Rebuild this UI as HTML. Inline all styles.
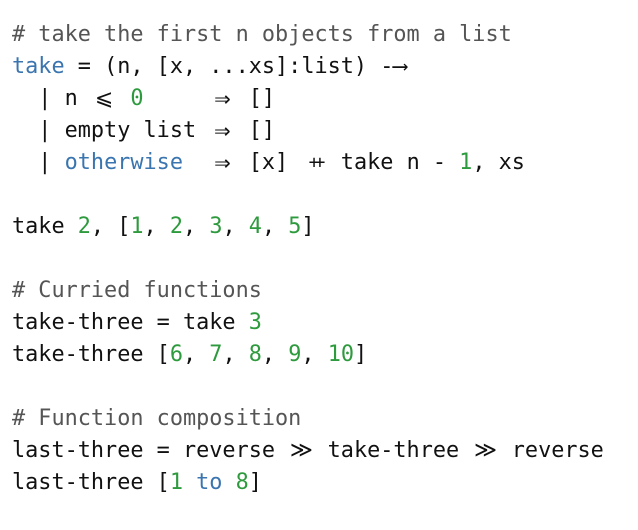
<!DOCTYPE html>
<html><head><meta charset="utf-8"><style>
html,body{margin:0;padding:0;background:#fff;width:638px;height:530px;overflow:hidden}
pre{margin:0;position:absolute;left:12px;top:19px;font-family:"DejaVu Sans Mono","Liberation Mono",monospace;font-size:21.85px;line-height:32px;color:#111}
.c{color:#555}.b{color:#3a75b0}.g{color:#2e9a3e}
.l{display:inline-block;width:26.3px;text-align:center;white-space:nowrap;line-height:32px;vertical-align:top}
.big{font-size:27px}
.pp{font-size:18px;letter-spacing:-5px;font-weight:300}
.a{display:inline-block;width:39.4px;white-space:nowrap;vertical-align:top;line-height:32px}
</style></head><body><pre><span class="c"># take the first n objects from a list</span>
<span class="b">take</span> = (n, [x, ...xs]:list) <span class="a">-⟶</span>
  | n <span class="l">⩽</span> <span class="g">0</span>     <span class="l big">⇒</span> []
  | empty list <span class="l big">⇒</span> []
  | <span class="b">otherwise</span>  <span class="l big">⇒</span> [x] <span class="l pp">++</span> take n - <span class="g">1</span>, xs

take <span class="g">2</span>, [<span class="g">1</span>, <span class="g">2</span>, <span class="g">3</span>, <span class="g">4</span>, <span class="g">5</span>]

<span class="c"># Curried functions</span>
take-three = take <span class="g">3</span>
take-three [<span class="g">6</span>, <span class="g">7</span>, <span class="g">8</span>, <span class="g">9</span>, <span class="g">10</span>]

<span class="c"># Function composition</span>
last-three = reverse <span class="l">≫</span> take-three <span class="l">≫</span> reverse
last-three [<span class="g">1</span> <span class="b">to</span> <span class="g">8</span>]</pre></body></html>
